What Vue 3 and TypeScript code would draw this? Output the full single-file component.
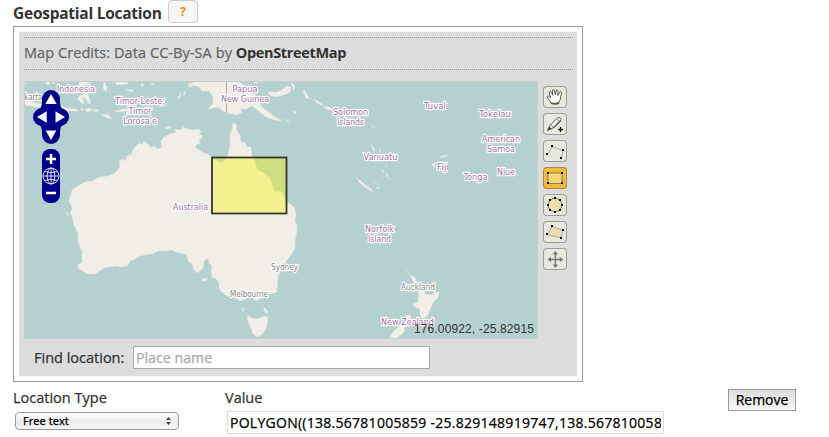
<script setup lang="ts">
import { ref } from 'vue'

interface MapLabel {
  text: string
  x: number
  y: number
  width: number
  city?: boolean
}

const labels: MapLabel[] = [
  { text: 'akarta', x: 20.5, y: 99.5, width: 21.5, city: true },
  { text: 'Indonesia', x: 57, y: 92, width: 38 },
  { text: 'Timor-Leste;', x: 115, y: 103.5, width: 50 },
  { text: 'Timor', x: 128.5, y: 113.5, width: 23 },
  { text: "Lorosa'e", x: 123, y: 123.5, width: 34 },
  { text: 'Papua', x: 232.5, y: 92, width: 25 },
  { text: 'New Guinea', x: 221, y: 102, width: 48 },
  { text: 'Solomon', x: 333, y: 115, width: 35 },
  { text: 'Islands', x: 337, y: 125, width: 27 },
  { text: 'Tokelau', x: 479, y: 117, width: 32 },
  { text: 'American', x: 482, y: 142, width: 38 },
  { text: 'Samoa', x: 487, y: 152, width: 28 },
  { text: 'Vanuatu', x: 363.5, y: 160, width: 34 },
  { text: 'Niue', x: 497, y: 175, width: 18 },
  { text: 'Tonga', x: 463.5, y: 180, width: 24 },
  { text: 'Australia', x: 173, y: 210, width: 35 },
  { text: 'Norfolk', x: 365, y: 232, width: 29 },
  { text: 'Island', x: 368, y: 242, width: 23 },
  { text: 'New Zealand', x: 381, y: 324.5, width: 53 },
  { text: 'Sydney', x: 271, y: 269.5, width: 27, city: true },
  { text: 'Melbourne', x: 230, y: 297, width: 38, city: true },
  { text: 'Auckland', x: 401, y: 290, width: 34, city: true },
]

const tools = ['pan', 'draw', 'line', 'box', 'circle', 'polygon', 'move'] as const
const activeTool = ref<(typeof tools)[number]>('box')
const place = ref('')
const locationType = ref('Free text')
const polygon = ref('POLYGON((138.56781005859 -25.829148919747,138.567810058')
</script>

<template>
  <main class="page">
    <header class="heading">
      <h2>Geospatial Location</h2>
      <button class="help">?</button>
    </header>

    <section class="frame">
      <div class="panel">
        <p class="credits">Map Credits: Data CC-By-SA by <a>OpenStreetMap</a></p>
        <div class="workspace">
          <div class="map">
            <svg class="canvas" viewBox="24 81 514 258" width="514" height="258">
              <defs>
                <clipPath id="tile-edge"><rect x="360" y="81" width="88" height="258" /></clipPath>
              </defs>
              <rect x="24" y="81" width="514" height="258" fill="#b5d0d0" />
              <g class="land">
                <path d="M73 220L71 214 72 207 69 201 71 194 72 190 76 187 85 182 92 181 100 177 108 176 115 173 120 167 119 161 122 159 125 161 127 156 132 154 133 149 137 145 140 143 142 145 144 141 149 145 150 148 154 146 158 149 162 147 161 141 164 137 170 134 176 132 174 129 181 130 183 127 188 129 193 130 199 129 201 132 199 134 203 136 201 139 199 139 200 144 197 144 195 147 202 152 209 155 214 159 221 163 226 159 229 151 230 143 230 133 232 130 233 123 236 124 237 131 240 135 241 142 246 143 246 147 251 147 252 156 256 165 257 170 264 173 270 178 272 184 275 192 281 191 286 201 294 207 296 214 295 221 297 226 297 232 295 240 295 247 291 255 287 260 283 267 278 276 277 291 275 293 267 294 260 298 257 301 251 297 245 299 241 301 233 297 227 296 221 291 219 288 219 283 216 279 212 277 211 272 212 266 209 263 208 258 204 261 203 268 200 271 197 273 194 270 192 264 189 262 187 258 186 254 179 253 176 252 172 250 165 251 158 251 152 254 145 255 140 256 135 259 130 261 127 266 121 267 115 266 110 267 104 268 101 270 95 274 87 274 83 271 78 268 78 264 82 263 82 252 80 247 78 242 78 233 74 225Z" />
                <path d="M248 315L251 318 257 319 265 316 268 317 267 324 265 331 261 335 257 337 253 334 250 326 247 319ZM202 279L208 278 206 281 202 281ZM265 308L268 312 266 313 263 309ZM242 307L244 309 243 312Z" />
                <path d="M194 81L192 85 199 87 202 91 209 91 213 97 213 103 208 109 218 107 222 110 227 113 237 115 242 112 240 109 246 109 252 106 260 112 266 117 274 120 282 121 275 117 267 111 262 107 259 101 256 96 250 92 246 87 238 81Z" />
                <path d="M268 92L277 92 282 90 286 86 291 87 290 92 284 95 276 97 269 95ZM291 82L295 86 294 90 292 86ZM304 90L308 96 310 99 306 98 303 92ZM314 99L321 103 323 106 317 103ZM324 106L331 108 334 111 326 109ZM347 117L353 119 347 118ZM292 111L296 112 295 114ZM284 119L290 122 286 121ZM357 178L363 183 371 189 373 192 366 188 359 182ZM372 145L375 150 373 151ZM382 169L384 171 383 173ZM386 174L387 177ZM375 182L376 184ZM376 188L380 187 378 189ZM432 164L438 161 434 165 437 167 433 167ZM440 157L448 154 443 158Z" />
                <path d="M407 270L410 275 415 277 417 282 420 288 423 289 425 294 432 295 434 292 439 292 438 298 434 301 431 307 428 315 423 319 420 315 420 309 414 307 413 304 418 302 419 296 418 289 413 281ZM407 315L411 315 410 321 405 326 404 332 396 339H389L393 332 398 327 402 323Z" />
                <path d="M24 98L33 102 41 104 49 106 61 105 66 108 77 109 78 111 65 111 53 109 43 108 31 106 24 105ZM24 81H26L25 87 24 91ZM45 81L47 85 50 84 49 81ZM51 81L55 81 54 84ZM61 90L73 91 76 93 65 93ZM80 108L84 109 82 111ZM85 109L91 108 91 111 87 112ZM92 110L96 109 99 110 97 112ZM101 115L108 114 112 119 107 118ZM115 111L123 109 129 109 135 107 137 109 127 111 117 112ZM80 81L79 85 76 87 82 90 85 88 84 94 79 96 78 99 82 104 84 103 83 97 86 99 88 104 91 103 89 98 88 92 92 91 94 89 88 88 85 85 91 83ZM114 81L120 82 127 81 128 84 117 85ZM104 81L107 87 106 92 103 88ZM125 89L134 90 131 92ZM126 112L133 108 141 108 134 113 126 116ZM139 108L151 106 149 108ZM159 107L163 101 161 107ZM178 98L181 92 180 98ZM183 95L186 90 185 95ZM188 84L193 83 192 87 189 87ZM165 128L170 126 172 128 166 129Z" />
                <path d="M66 211L69 216 67 215M71 210L73 216 70 214M70 204L68 201M254 81L259 81 258 83 254 83ZM141 83L144 85 142 87ZM151 83L155 84 152 85Z" />
              </g>
              <path d="M226.5 81V113" stroke="#aaa9a6" />
              <path d="M371 125L375 128M376 141V143M380 148V153M386 164V167M387 174L388 177M390 178V180M377 183L378 185M476 184H478M431 133H432" stroke="#e8e7df" />
              <g class="labels">
                <text
                  v-for="label in labels"
                  :key="label.text"
                  :x="label.x"
                  :y="label.y"
                  :textLength="label.width"
                  :class="{ city: label.city }"
                  lengthAdjust="spacingAndGlyphs"
                >{{ label.text }}</text>
                <g clip-path="url(#tile-edge)">
                  <text x="424" y="109" textLength="27" lengthAdjust="spacingAndGlyphs">Tuvalu</text>
                  <text x="437" y="169.5" textLength="12" lengthAdjust="spacingAndGlyphs">Fiji</text>
                </g>
              </g>
              <rect x="212" y="157.5" width="74.5" height="56" fill="#f8f800" fill-opacity=".38" stroke="#36362c" stroke-width="1.8" />
              <rect x="24.5" y="81.5" width="513" height="257" fill="none" stroke="#c8cecc" />
            </svg>

            <svg class="navigation" viewBox="0 0 36 114" width="36" height="114">
              <g fill="#00008b">
                <rect x="9" y="0" width="18" height="54" rx="9" />
                <rect x="0" y="18" width="36" height="18" rx="9" />
                <path d="M5 20Q9 18 9 12H27Q27 18 31 20V34Q27 36 27 42H9Q9 36 5 34Z" />
                <rect x="9" y="59" width="18" height="54" rx="8" />
              </g>
              <path d="M18 4L23.7 14H12.3ZM18 50L12.7 40.5H23.3ZM4 27L13.7 21.3V32.7ZM32 27L22.5 21.3V32.7Z" fill="#fff" />
              <path d="M13 69H23M18 64V74M13 103H23" stroke="#fff" stroke-width="2.5" />
              <g fill="none" stroke="#dadaf2" stroke-width="1">
                <circle cx="18" cy="86" r="8" />
                <ellipse cx="18" cy="86" rx="3.8" ry="8" />
                <path d="M18 78V94M10 86H26M11.5 81.5Q18 84 24.5 81.5M11.5 90.5Q18 88 24.5 90.5" />
              </g>
            </svg>
            <span class="position">176.00922, -25.82915</span>
          </div>

          <div class="toolbar">
            <button
              v-for="tool in tools"
              :key="tool"
              :class="['tool', { active: activeTool === tool }]"
              @click="activeTool = tool"
            >
              <svg viewBox="0 0 24 22" width="24" height="22">
                <g v-if="tool === 'pan'">
                  <path d="M8.2 17.5C7.7 15.6 5.4 13.3 4.3 11.2C3.9 9.9 5.5 9.5 6.3 10.7L7.6 12L6.3 6.9C6 5.2 7.8 4.8 8.5 6.4L9.8 9.3L9.3 4.9C9.3 3.1 11.2 3.1 11.5 4.8L12.4 9L13.1 4.9C13.5 3.3 15.3 3.7 15.1 5.3L14.7 9.5L16.6 6.5C17.5 5.1 19 6 18.5 7.4C17.4 9.7 17.8 12.6 16.8 14.5C16 15.8 15.8 16.5 15.6 17.7Z" fill="#fff" stroke="#55554f" />
                  <path d="M8.2 16L8.6 18Q12 19.5 15.5 18L16 15.8Q12 18 8.2 16Z" fill="#55554f" />
                </g>
                <g v-else-if="tool === 'draw'">
                  <path d="M4.5 17.5L7 12.2L14.9 4.7Q17.4 3.7 18.2 6.6L10.2 14.8Z" fill="#f6f6ee" stroke="#64645f" />
                  <path d="M4.3 17.6L6.2 13.5L8.8 16ZM9.8 14.5L17.8 6.7L18.2 8L10.5 15.5Z" fill="#44443f" />
                  <path d="M7.5 12.4Q9.4 12.2 9.8 14.2M13.2 6.5Q15.8 6.3 16.2 8.5" fill="none" stroke="#888882" stroke-width=".8" />
                  <path d="M15 16.5H20M17.5 14V19" stroke="#111" stroke-width="1.3" />
                </g>
                <g v-else-if="tool === 'line'">
                  <path d="M4.3 14.7L9.3 6.7L20 10.7L18.2 18.4" class="outline" />
                  <path d="M3 13h2v2h-2zM8 5h2v2h-2zM19 9h2v2h-2zM17 17h2v2h-2z" class="nodes" />
                </g>
                <g v-else-if="tool === 'box'">
                  <path d="M5 6H19V16.5H5Z" fill="#f6d67d" stroke="#967b3a" />
                  <path d="M4 5h2v2h-2zM18 5h2v2h-2zM4 15h2v2h-2zM18 15h2v2h-2z" class="nodes" />
                </g>
                <g v-else-if="tool === 'circle'">
                  <circle cx="12" cy="11" r="6.8" fill="#efdfac" stroke="#77756a" />
                  <path d="M11 3h2v2h-2zM16 5h2v2h-2zM18 10h2v2h-2zM16 15h2v2h-2zM11 17h2v2h-2zM6 15h2v2h-2zM4 10h2v2h-2zM6 5h2v2h-2z" class="nodes" />
                </g>
                <g v-else-if="tool === 'polygon'">
                  <path d="M4.5 13.5L9 5.5L19.8 9.2L18.2 17Z" fill="#efdfac" stroke="#aaa69a" />
                  <path d="M3 12h2v2h-2zM8 4h2v2h-2zM19 8h2v2h-2zM17 16h2v2h-2z" class="nodes" />
                </g>
                <g v-else>
                  <path d="M12.4 5V18M6 11.5H19" stroke="#777773" stroke-width="1.4" />
                  <path d="M12.4 3L15.2 6.5H9.6ZM12.4 20L15.2 16.5H9.6ZM4.5 11.5L8 8.7V14.3ZM20.3 11.5L16.8 8.7V14.3Z" fill="#777773" />
                </g>
              </svg>
            </button>
          </div>
        </div>
        <label class="finder"><span>Find location:</span><input v-model="place" placeholder="Place name" /></label>
      </div>
    </section>

    <section class="fields">
      <div class="type-field">
        <label>Location Type</label>
        <button class="select">
          <span>{{ locationType }}</span>
          <svg viewBox="0 0 5 8" width="5" height="8"><path d="M0 3L2.5 0L5 3ZM0 5L2.5 8L5 5Z" fill="#444" /></svg>
        </button>
      </div>
      <div class="value-field">
        <label>Value</label>
        <input v-model="polygon" />
      </div>
      <button class="remove">Remove</button>
    </section>
  </main>
</template>

<style>
body {
  background: #fff;
}
</style>

<style scoped>
* {
  box-sizing: border-box;
}

.page {
  width: 829px;
  height: 437px;
  padding-left: 13px;
  overflow: hidden;
  color: #333;
  font: 500 14.5px/20px 'Trebuchet MS', 'Open Sans', sans-serif;
}

button,
input {
  font-family: inherit;
  font-weight: inherit;
}

.credits,
.finder,
.fields {
  -webkit-text-stroke: 0.25px currentColor;
}

.heading {
  display: flex;
  height: 26px;
}

h2 {
  width: 155px;
  margin: 0;
  padding-top: 2px;
  font-size: 15.5px;
  line-height: 22px;
  letter-spacing: -0.25px;
  white-space: nowrap;
}

.help {
  width: 30px;
  height: 23px;
  padding: 0 0 1px;
  border: 1px solid #ccc;
  border-radius: 4px;
  background: #f6f6f6;
  color: #f09000;
  font-size: 12px;
  font-weight: 700;
}

.frame {
  width: 570px;
  height: 356px;
  padding: 5px;
  border: 1px solid #999;
}

.panel {
  height: 344px;
  padding: 5px 4px 0 5px;
  background: #ddd;
}

.credits {
  height: 33px;
  margin: 0 0 11px;
  padding-top: 5px;
  border: dotted #999;
  border-width: 1px 0;
  color: #666;
  letter-spacing: 0.07px;
  white-space: nowrap;
}

.credits a {
  color: #333;
  font-weight: 700;
  letter-spacing: -0.35px;
  -webkit-text-stroke: 0;
}

.workspace {
  display: flex;
  gap: 5px;
}

.map {
  position: relative;
  width: 514px;
  height: 258px;
}

.canvas,
.tool svg {
  display: block;
}

.land {
  fill: #f1eee8;
  stroke: #e2e3dc;
  stroke-width: 0.5;
}

.labels text {
  fill: #a571a5;
  stroke: #fff;
  stroke-width: 2.5px;
  stroke-linejoin: round;
  paint-order: stroke;
  font: 400 9px 'DejaVu Sans', sans-serif;
}

.labels .city {
  fill: #838383;
  font-size: 8.5px;
}

.navigation {
  position: absolute;
  left: 9px;
  top: 9px;
}

.position {
  position: absolute;
  right: 4px;
  bottom: 1px;
  color: #333;
  font: 12px/18px 'Liberation Sans', sans-serif;
  letter-spacing: 0.13px;
}

.toolbar {
  display: flex;
  flex-direction: column;
  gap: 5px;
  padding-top: 5px;
}

.tool {
  width: 24px;
  height: 22px;
  padding: 0;
  border: 0;
  border-radius: 4px;
  background: #e8e8e1;
  box-shadow: inset 0 0 0 1px #9d9e91;
}

.active {
  background: #efba40;
  box-shadow: inset 0 0 0 1px #a78b48;
}

.outline {
  fill: none;
  stroke: #aaa;
}

.nodes {
  fill: #111;
}

.finder {
  display: flex;
  align-items: center;
  width: 406px;
  height: 23px;
  margin-top: 7px;
  padding-left: 10px;
}

.finder span {
  width: 99px;
  white-space: nowrap;
}

.finder input {
  width: 297px;
  height: 23px;
  padding: 0 2px;
  border: 1px solid #aaa;
  background: #fff;
  font-size: 14.2px;
}

.finder input::placeholder {
  color: #aaa;
  opacity: 1;
}

.fields {
  display: flex;
  padding-top: 6px;
}

.type-field {
  width: 212px;
}

.fields label {
  display: block;
  height: 23px;
}

.select {
  display: flex;
  align-items: center;
  justify-content: space-between;
  width: 164px;
  height: 18px;
  margin: 1px 0 0 2px;
  padding: 0 7px;
  border: 1px solid #999;
  border-radius: 4px;
  background: linear-gradient(#fff, #ececec 50%, #f6f6f6);
  color: #000;
  font: 11px/16px 'Noto Sans', sans-serif;
  letter-spacing: 0.1px;
}

.value-field {
  width: 503px;
}

.value-field input {
  width: 437px;
  height: 23px;
  margin-left: 2px;
  padding: 0 2px;
  border: 1px solid #ddd;
  background: #fff;
  color: #000;
  font-size: 14px;
  letter-spacing: 0.27px;
}

.remove {
  width: 68px;
  height: 22px;
  margin-top: 1px;
  padding: 0;
  border: 1px solid #999;
  background: linear-gradient(#ddd, #f8f8f8);
  color: #000;
  font-size: 14px;
  line-height: 20px;
}
</style>
